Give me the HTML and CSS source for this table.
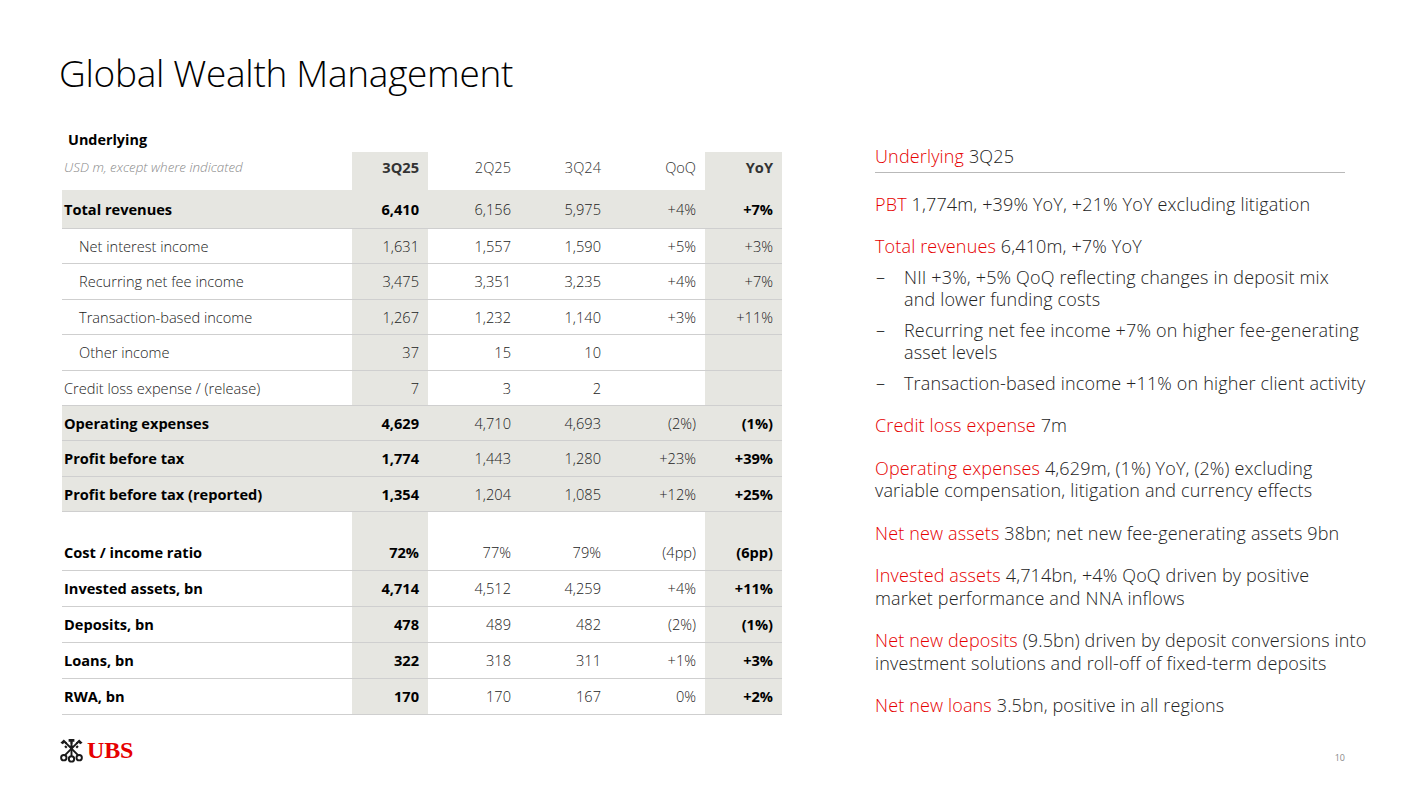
FILE: index.html
```html
<!DOCTYPE html>
<html lang="en">
<head>
<meta charset="utf-8">
<title>Global Wealth Management</title>
<link rel="stylesheet" href="styles.css">
</head>
<body>
<div class="slide">
  <h1 class="title">Global Wealth Management</h1>
  <div class="content">
    <table class="fin">
      <colgroup>
        <col class="c-label"><col class="c-3q25"><col class="c-2q25"><col class="c-3q24"><col class="c-qoq"><col class="c-yoy">
      </colgroup>
      <tr class="cap"><td colspan="6">Underlying</td></tr>
      <tr class="head">
        <td class="units">USD m, except where indicated</td>
        <td class="hl b">3Q25</td><td>2Q25</td><td>3Q24</td><td>QoQ</td><td class="hl b">YoY</td>
      </tr>
      <tr class="row grey b total">
        <td>Total revenues</td><td>6,410</td><td class="n">6,156</td><td class="n">5,975</td><td class="n">+4%</td><td>+7%</td>
      </tr>
      <tr class="row">
        <td class="ind">Net interest income</td><td class="hl">1,631</td><td>1,557</td><td>1,590</td><td>+5%</td><td class="hl">+3%</td>
      </tr>
      <tr class="row">
        <td class="ind">Recurring net fee income</td><td class="hl">3,475</td><td>3,351</td><td>3,235</td><td>+4%</td><td class="hl">+7%</td>
      </tr>
      <tr class="row">
        <td class="ind">Transaction-based income</td><td class="hl">1,267</td><td>1,232</td><td>1,140</td><td>+3%</td><td class="hl">+11%</td>
      </tr>
      <tr class="row">
        <td class="ind">Other income</td><td class="hl">37</td><td>15</td><td>10</td><td></td><td class="hl"></td>
      </tr>
      <tr class="row">
        <td>Credit loss expense / (release)</td><td class="hl">7</td><td>3</td><td>2</td><td></td><td class="hl"></td>
      </tr>
      <tr class="row grey b">
        <td>Operating expenses</td><td>4,629</td><td class="n">4,710</td><td class="n">4,693</td><td class="n">(2%)</td><td>(1%)</td>
      </tr>
      <tr class="row grey b">
        <td>Profit before tax</td><td>1,774</td><td class="n">1,443</td><td class="n">1,280</td><td class="n">+23%</td><td>+39%</td>
      </tr>
      <tr class="row grey b">
        <td>Profit before tax (reported)</td><td>1,354</td><td class="n">1,204</td><td class="n">1,085</td><td class="n">+12%</td><td>+25%</td>
      </tr>
      <tr class="spacer"><td></td><td class="hl"></td><td></td><td></td><td></td><td class="hl"></td></tr>
      <tr class="row2">
        <td class="b">Cost / income ratio</td><td class="hl b">72%</td><td>77%</td><td>79%</td><td>(4pp)</td><td class="hl b">(6pp)</td>
      </tr>
      <tr class="row2">
        <td class="b">Invested assets, bn</td><td class="hl b">4,714</td><td>4,512</td><td>4,259</td><td>+4%</td><td class="hl b">+11%</td>
      </tr>
      <tr class="row2">
        <td class="b">Deposits, bn</td><td class="hl b">478</td><td>489</td><td>482</td><td>(2%)</td><td class="hl b">(1%)</td>
      </tr>
      <tr class="row2">
        <td class="b">Loans, bn</td><td class="hl b">322</td><td>318</td><td>311</td><td>+1%</td><td class="hl b">+3%</td>
      </tr>
      <tr class="row2">
        <td class="b">RWA, bn</td><td class="hl b">170</td><td>170</td><td>167</td><td>0%</td><td class="hl b">+2%</td>
      </tr>
    </table>

    <div class="notes">
      <div class="notes-head"><span class="red">Underlying</span> 3Q25</div>
      <p class="para"><span class="red">PBT</span> 1,774m, +39% YoY, +21% YoY excluding litigation</p>
      <div class="para">
        <p class="lead"><span class="red">Total revenues</span> 6,410m, +7% YoY</p>
        <ul class="dash">
          <li>NII +3%, +5% QoQ reflecting changes in deposit mix<br>and lower funding costs</li>
          <li>Recurring net fee income +7% on higher fee-generating<br>asset levels</li>
          <li>Transaction-based income +11% on higher client activity</li>
        </ul>
      </div>
      <p class="para"><span class="red">Credit loss expense</span> 7m</p>
      <p class="para"><span class="red">Operating expenses</span> 4,629m, (1%) YoY, (2%) excluding<br>variable compensation, litigation and currency effects</p>
      <p class="para"><span class="red">Net new assets</span> 38bn; net new fee-generating assets 9bn</p>
      <p class="para"><span class="red">Invested assets</span> 4,714bn, +4% QoQ driven by positive<br>market performance and NNA inflows</p>
      <p class="para"><span class="red">Net new deposits</span> (9.5bn) driven by deposit conversions into<br>investment solutions and roll-off of fixed-term deposits</p>
      <p class="para"><span class="red">Net new loans</span> 3.5bn, positive in all regions</p>
    </div>
  </div>

  <div class="footer">
    <div class="logo">
      <svg class="keys" viewBox="0 0 26 26" width="25" height="25" aria-hidden="true">
        <g fill="none" stroke="#1a1a1a" stroke-width="2" stroke-linecap="round">
          <line x1="13" y1="4" x2="13" y2="18"/>
          <line x1="6.5" y1="17.5" x2="19" y2="5"/>
          <line x1="19.5" y1="17.5" x2="7" y2="5"/>
          <circle cx="5" cy="20.5" r="2.8"/>
          <circle cx="13" cy="21.8" r="2.8"/>
          <circle cx="21" cy="20.5" r="2.8"/>
        </g>
        <g fill="#1a1a1a">
          <polygon points="10,1 16,1 16,4 14,4 14,6 12,6 12,4 10,4"/>
          <polygon points="1.5,5 5,1.5 8.5,5 7,6.5 5.5,5 4,6.5"/>
          <polygon points="24.5,5 21,1.5 17.5,5 19,6.5 20.5,5 22,6.5"/>
          <rect x="11" y="8" width="4" height="1.8"/>
          <polygon points="5.5,9 7,7.5 8.8,9.3 7.3,10.8"/>
          <polygon points="20.5,9 19,7.5 17.2,9.3 18.7,10.8"/>
        </g>
      </svg>
      <span class="ubs">UBS</span>
    </div>
    <div class="pageno">10</div>
  </div>
</div>
</body>
</html>
```

FILE: styles.css
```css
html, body {
  margin: 0;
  padding: 0;
  background: #ffffff;
}

body {
  font-family: "Open Sans", "Noto Sans", "Liberation Sans", sans-serif;
  color: #222;
}

.slide {
  width: 1407px;
  height: 792px;
  box-sizing: border-box;
  padding: 49px 0 0 0;
  display: flex;
  flex-direction: column;
  overflow: hidden;
}

.title {
  margin: 0 0 0 59px;
  font-size: 37px;
  line-height: 48px;
  font-weight: 300;
  color: #000;
  letter-spacing: -0.3px;
}

.content {
  display: flex;
  align-items: flex-start;
  margin-top: 31px;
  padding-left: 62px;
}

/* ---------- table ---------- */
.fin {
  border-collapse: collapse;
  table-layout: fixed;
  width: 720px;
  font-size: 14.6px;
  font-weight: 300;
  color: #222;
}

.c-label { width: 290px; }
.c-3q25 { width: 76px; }
.c-2q25 { width: 92px; }
.c-3q24 { width: 90px; }
.c-qoq { width: 95px; }
.c-yoy { width: 77px; }

.fin td {
  padding: 0 9px 0 2px;
  text-align: right;
  white-space: nowrap;
}

.fin td:first-child {
  text-align: left;
  padding-left: 2px;
}

.fin .cap td {
  line-height: 24px;
  font-weight: 700;
  font-size: 14.4px;
  color: #000;
  padding-left: 6px;
}

.fin .head td {
  line-height: 31px;
  padding-bottom: 7px;
  color: #333;
}

.fin .head .units {
  font-style: italic;
  color: #8a8a8a;
  font-size: 13.4px;
}

.fin .row td {
  line-height: 34.4px;
  border-bottom: 1px solid #cfcfcf;
}

.fin .total td {
  line-height: 38px;
}

.fin .row2 td {
  line-height: 35px;
  border-bottom: 1px solid #cfcfcf;
}

.fin .spacer td {
  height: 23px;
  line-height: 23px;
}

.fin .hl,
.fin .grey td {
  background: #e6e6e1;
}

.fin .b,
.fin .grey td {
  font-weight: 700;
  color: #000;
}

.fin .grey td.n {
  font-weight: 300;
  color: #222;
}

.fin td.ind {
  padding-left: 17px;
}

/* ---------- notes ---------- */
.notes {
  margin-left: 93px;
  margin-top: 17px;
  width: 500px;
  font-size: 18px;
  letter-spacing: 0.15px;
  font-weight: 300;
  line-height: 22.5px;
  color: #222;
}

.red {
  color: #e60000;
}

.notes-head {
  width: 470px;
  padding-bottom: 4px;
  border-bottom: 1px solid #b9b9b9;
  margin-bottom: 20px;
}

.notes p {
  margin: 0;
}

.para {
  margin: 0 0 20px 0;
  white-space: nowrap;
}

.notes p.para {
  margin-bottom: 20px;
}

.lead {
  margin: 0;
}

.dash {
  list-style: none;
  margin: 8px 0 0 0;
  padding: 0;
}

.dash li {
  position: relative;
  padding-left: 29px;
  margin-bottom: 8px;
}

.dash li:last-child {
  margin-bottom: 0;
}

.dash li::before {
  content: "\2013";
  position: absolute;
  left: 1px;
  top: 0;
}

/* ---------- footer ---------- */
.footer {
  margin-top: auto;
  height: 62px;
  display: flex;
  justify-content: space-between;
  align-items: flex-start;
  padding: 0 62px 0 59px;
}

.logo {
  display: flex;
  align-items: center;
  gap: 3px;
  margin-top: 1px;
}

.keys {
  display: block;
}

.ubs {
  font-family: "Liberation Serif", "DejaVu Serif", serif;
  font-weight: 700;
  font-size: 24px;
  line-height: 24px;
  color: #e60000;
  letter-spacing: -0.2px;
}

.pageno {
  font-size: 9px;
  color: #888;
  margin-top: 14px;
}
```
